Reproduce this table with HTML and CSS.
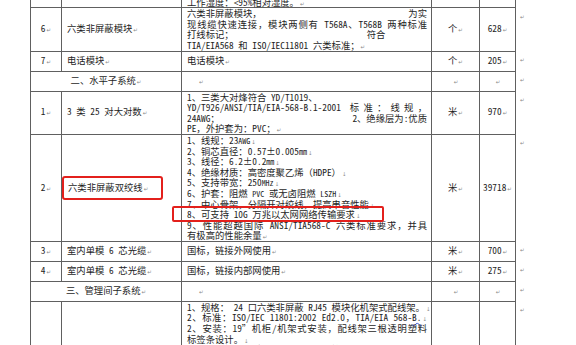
FILE: index.html
```html
<!DOCTYPE html>
<html lang="zh-CN">
<head>
<meta charset="utf-8">
<title>设备清单</title>
<link rel="stylesheet" href="styles.css">
</head>
<body>
<table class="spec">
  <colgroup>
    <col class="c-no"><col class="c-name"><col class="c-desc"><col class="c-unit"><col class="c-qty"><col class="c-eor">
  </colgroup>
  <tbody>
    <tr>
      <td class="no"></td><td class="name"></td>
      <td class="desc">
        <div class="ln">工作温度：-10℃～+60℃；</div>
        <div class="ln">工作湿度：&lt;95%相对湿度。<span class="pm">↵</span></div>
      </td>
      <td class="unit"></td><td class="qty"></td><td class="eor"></td>
    </tr>
    <tr>
      <td class="no">6<span class="pm">↵</span></td>
      <td class="name">六类非屏蔽模块<span class="pm">↵</span></td>
      <td class="desc">
        <div class="ln sb"><span>六类非屏蔽模块，</span><span>为实</span></div>
        <div class="ln j">现线缆快速连接，模块两侧有 T568A、T568B 两种标准</div>
        <div class="ln">打线标记；<span class="gap">符合</span></div>
        <div class="ln">TIA/EIA568 和 ISO/IEC11801 六类标准；<span class="pm">↵</span></div>
      </td>
      <td class="unit">个<span class="pm">↵</span></td>
      <td class="qty">628<span class="pm">↵</span></td>
      <td class="eor"><span class="pm">↵</span></td>
    </tr>
    <tr>
      <td class="no">7<span class="pm">↵</span></td>
      <td class="name">电话模块<span class="pm">↵</span></td>
      <td class="desc">电话模块<span class="pm">↵</span></td>
      <td class="unit">个<span class="pm">↵</span></td>
      <td class="qty">205<span class="pm">↵</span></td>
      <td class="eor"><span class="pm">↵</span></td>
    </tr>
    <tr>
      <td class="sec" colspan="2">二、水平子系统<span class="pm">↵</span></td>
      <td class="desc"><span class="ind"><span class="pm">↵</span></span></td>
      <td class="unit"><span class="pm">↵</span></td>
      <td class="qty"><span class="pm">↵</span></td>
      <td class="eor"><span class="pm">↵</span></td>
    </tr>
    <tr>
      <td class="no">1<span class="pm">↵</span></td>
      <td class="name">3 类 25 对大对数<span class="pm">↵</span></td>
      <td class="desc">
        <div class="ln">1、三类大对烽符合 YD/T1019、</div>
        <div class="ln j">YD/T926/ANSI/TIA/EIA-568-B.1-2001 标准：线规，</div>
        <div class="ln sb"><span>24AWG；</span><span>2、绝缘层为:优质</span></div>
        <div class="ln">PE，外护套为：PVC；<span class="pm">↵</span></div>
      </td>
      <td class="unit">米<span class="pm">↵</span></td>
      <td class="qty">970<span class="pm">↵</span></td>
      <td class="eor"><span class="pm">↵</span></td>
    </tr>
    <tr>
      <td class="no">2<span class="pm">↵</span></td>
      <td class="name"><span class="hl">六类非屏蔽双绞线<span class="pm">↵</span></span></td>
      <td class="desc">
        <div class="ln">1、线规：23<span class="sm">AWG</span><span class="pm">↓</span></div>
        <div class="ln">2、铜芯直径：0.57±0.005<span class="sm">mm</span><span class="pm">↓</span></div>
        <div class="ln">3、线径：6.2±0.2<span class="sm">mm</span><span class="pm">↓</span></div>
        <div class="ln">4、绝缘材质：高密度聚乙烯（HDPE）<span class="pm">↓</span></div>
        <div class="ln">5、支持带宽：250<span class="sm">MHz</span><span class="pm">↓</span></div>
        <div class="ln">6、护套：阻燃 <span class="sm">PVC</span> 或无卤阻燃 <span class="sm">LSZH</span><span class="pm">↓</span></div>
        <div class="ln">7、中心骨架，分隔开对绞线，提高串音性能<span class="pm">↓</span></div>
        <div class="ln mark">8、可支持 10G 万兆以太网网络传输要求<span class="pm">↓</span><span class="box"></span></div>
        <div class="ln j">9、性能超越国际 ANSI/TIA568-C 六类标准要求，并具</div>
        <div class="ln">有极高的性能余量<span class="pm">↵</span></div>
      </td>
      <td class="unit">米<span class="pm">↵</span></td>
      <td class="qty">39718<span class="pm">↵</span></td>
      <td class="eor"><span class="pm">↵</span></td>
    </tr>
    <tr>
      <td class="no">3<span class="pm">↵</span></td>
      <td class="name">室内单模 6 芯光缆<span class="pm">↵</span></td>
      <td class="desc">国标，链接外网使用<span class="pm">↵</span></td>
      <td class="unit">米<span class="pm">↵</span></td>
      <td class="qty">700<span class="pm">↵</span></td>
      <td class="eor"><span class="pm">↵</span></td>
    </tr>
    <tr>
      <td class="no">4<span class="pm">↵</span></td>
      <td class="name">室内单模 6 芯光缆<span class="pm">↵</span></td>
      <td class="desc">国标，链接内部网使用<span class="pm">↵</span></td>
      <td class="unit">米<span class="pm">↵</span></td>
      <td class="qty">275<span class="pm">↵</span></td>
      <td class="eor"><span class="pm">↵</span></td>
    </tr>
    <tr>
      <td class="sec" colspan="2">三、管理间子系统<span class="pm">↵</span></td>
      <td class="desc"><span class="ind"><span class="pm">↵</span></span></td>
      <td class="unit"><span class="pm">↵</span></td>
      <td class="qty"><span class="pm">↵</span></td>
      <td class="eor"><span class="pm">↵</span></td>
    </tr>
    <tr>
      <td class="no"></td>
      <td class="name"></td>
      <td class="desc">
        <div class="ln j">1、规格： 24 口六类非屏蔽 RJ45 模块化机架式配线架。<span class="pm">↓</span></div>
        <div class="ln j">2、标准：ISO/IEC 11801:2002 Ed2.0，TIA/EIA 568-<span class="sq">B.</span><span class="pm">↓</span></div>
        <div class="ln j">2、安装：19”机柜/机架式安装，配线架三根透明塑料</div>
        <div class="ln">标签条设计。<span class="pm">↓</span></div>
        <div class="ln">3、端口前后均有标签条，便于线缆管理。<span class="pm">↓</span></div>
      </td>
      <td class="unit"></td>
      <td class="qty"></td>
      <td class="eor"><span class="pm">↵</span></td>
    </tr>
  </tbody>
</table>
</body>
</html>
```

FILE: styles.css
```css
* { box-sizing: border-box; }
html, body { margin: 0; padding: 0; background: #ffffff; }
body {
  font-family: "Noto Sans Mono CJK SC", "Noto Sans CJK SC", sans-serif;
  font-size: 9.33px;
  line-height: 10.6px;
  color: #1e1e1e;
}
.spec {
  border-collapse: collapse;
  table-layout: fixed;
  width: 495px;
  margin: -15px 0 0 30px;
}
.c-no { width: 31px; }
.c-name { width: 120px; }
.c-desc { width: 250px; }
.c-unit { width: 48px; }
.c-qty { width: 36px; }
.c-eor { width: 10px; }
.spec tr { height: 20px; }
.spec td {
  border: 1px solid #606060;
  padding: 0;
  vertical-align: middle;
  white-space: nowrap;
}
.spec td.eor {
  border: none;
  vertical-align: top;
  padding: 2px 0 0 3px;
}
.no, .unit, .qty, .sec { text-align: center; }
.name { padding-left: 5px !important; }
.desc { padding: 0 4px 0 5px !important; }
.ln { height: 10.6px; }
.sb { display: flex; justify-content: space-between; }
.j { text-align: justify; text-align-last: justify; }
.gap { margin-left: 133px; }
.ind { padding-left: 11px; }
.pm {
  font-family: "DejaVu Sans", sans-serif;
  font-size: 5.5px;
  color: #8a8a8a;
  margin-left: 1px;
}
.sm { font-size: 8px; }
.sq { text-decoration: underline wavy #3a56d8; text-decoration-thickness: 1px; }
.hl {
  display: inline-block;
  margin-left: -5px;
  padding: 4px 13px 4px 4px;
  border: 2px solid #e3201c;
  border-radius: 3px;
}
.mark { position: relative; }
.box {
  position: absolute;
  left: -15px;
  top: -3px;
  width: 212px;
  height: 16px;
  border: 2px solid #e3201c;
  border-radius: 2px;
}
```
